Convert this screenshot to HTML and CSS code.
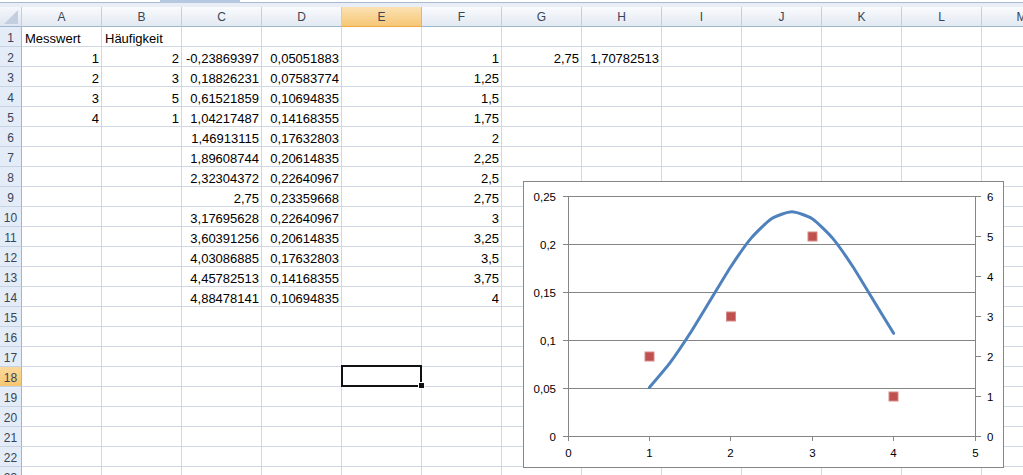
FILE: index.html
```html
<!DOCTYPE html>
<html lang="de">
<head>
<meta charset="utf-8">
<title>Tabelle</title>
<link rel="stylesheet" href="styles.css">
</head>
<body>
<div class="topbar"><div class="tab"></div></div>
<div class="sheet">
  <div class="row head">
    <div class="corner"></div>
    <div class="ch">A</div><div class="ch">B</div><div class="ch">C</div><div class="ch">D</div><div class="ch on">E</div><div class="ch">F</div><div class="ch">G</div><div class="ch">H</div><div class="ch">I</div><div class="ch">J</div><div class="ch">K</div><div class="ch">L</div><div class="ch">M</div>
  </div>
  <div class="row"><div class="rh">1</div><div class="c">Messwert</div><div class="c">Häufigkeit</div><div class="c"></div><div class="c"></div><div class="c"></div><div class="c"></div><div class="c"></div><div class="c"></div><div class="c"></div><div class="c"></div><div class="c"></div><div class="c"></div><div class="c"></div></div>
  <div class="row"><div class="rh">2</div><div class="c n">1</div><div class="c n">2</div><div class="c n">-0,23869397</div><div class="c n">0,05051883</div><div class="c"></div><div class="c n">1</div><div class="c n">2,75</div><div class="c n">1,70782513</div><div class="c"></div><div class="c"></div><div class="c"></div><div class="c"></div><div class="c"></div></div>
  <div class="row"><div class="rh">3</div><div class="c n">2</div><div class="c n">3</div><div class="c n">0,18826231</div><div class="c n">0,07583774</div><div class="c"></div><div class="c n">1,25</div><div class="c"></div><div class="c"></div><div class="c"></div><div class="c"></div><div class="c"></div><div class="c"></div><div class="c"></div></div>
  <div class="row"><div class="rh">4</div><div class="c n">3</div><div class="c n">5</div><div class="c n">0,61521859</div><div class="c n">0,10694835</div><div class="c"></div><div class="c n">1,5</div><div class="c"></div><div class="c"></div><div class="c"></div><div class="c"></div><div class="c"></div><div class="c"></div><div class="c"></div></div>
  <div class="row"><div class="rh">5</div><div class="c n">4</div><div class="c n">1</div><div class="c n">1,04217487</div><div class="c n">0,14168355</div><div class="c"></div><div class="c n">1,75</div><div class="c"></div><div class="c"></div><div class="c"></div><div class="c"></div><div class="c"></div><div class="c"></div><div class="c"></div></div>
  <div class="row"><div class="rh">6</div><div class="c"></div><div class="c"></div><div class="c n">1,46913115</div><div class="c n">0,17632803</div><div class="c"></div><div class="c n">2</div><div class="c"></div><div class="c"></div><div class="c"></div><div class="c"></div><div class="c"></div><div class="c"></div><div class="c"></div></div>
  <div class="row"><div class="rh">7</div><div class="c"></div><div class="c"></div><div class="c n">1,89608744</div><div class="c n">0,20614835</div><div class="c"></div><div class="c n">2,25</div><div class="c"></div><div class="c"></div><div class="c"></div><div class="c"></div><div class="c"></div><div class="c"></div><div class="c"></div></div>
  <div class="row"><div class="rh">8</div><div class="c"></div><div class="c"></div><div class="c n">2,32304372</div><div class="c n">0,22640967</div><div class="c"></div><div class="c n">2,5</div><div class="c"></div><div class="c"></div><div class="c"></div><div class="c"></div><div class="c"></div><div class="c"></div><div class="c"></div></div>
  <div class="row"><div class="rh">9</div><div class="c"></div><div class="c"></div><div class="c n">2,75</div><div class="c n">0,23359668</div><div class="c"></div><div class="c n">2,75</div><div class="c"></div><div class="c"></div><div class="c"></div><div class="c"></div><div class="c"></div><div class="c"></div><div class="c"></div></div>
  <div class="row"><div class="rh">10</div><div class="c"></div><div class="c"></div><div class="c n">3,17695628</div><div class="c n">0,22640967</div><div class="c"></div><div class="c n">3</div><div class="c"></div><div class="c"></div><div class="c"></div><div class="c"></div><div class="c"></div><div class="c"></div><div class="c"></div></div>
  <div class="row"><div class="rh">11</div><div class="c"></div><div class="c"></div><div class="c n">3,60391256</div><div class="c n">0,20614835</div><div class="c"></div><div class="c n">3,25</div><div class="c"></div><div class="c"></div><div class="c"></div><div class="c"></div><div class="c"></div><div class="c"></div><div class="c"></div></div>
  <div class="row"><div class="rh">12</div><div class="c"></div><div class="c"></div><div class="c n">4,03086885</div><div class="c n">0,17632803</div><div class="c"></div><div class="c n">3,5</div><div class="c"></div><div class="c"></div><div class="c"></div><div class="c"></div><div class="c"></div><div class="c"></div><div class="c"></div></div>
  <div class="row"><div class="rh">13</div><div class="c"></div><div class="c"></div><div class="c n">4,45782513</div><div class="c n">0,14168355</div><div class="c"></div><div class="c n">3,75</div><div class="c"></div><div class="c"></div><div class="c"></div><div class="c"></div><div class="c"></div><div class="c"></div><div class="c"></div></div>
  <div class="row"><div class="rh">14</div><div class="c"></div><div class="c"></div><div class="c n">4,88478141</div><div class="c n">0,10694835</div><div class="c"></div><div class="c n">4</div><div class="c"></div><div class="c"></div><div class="c"></div><div class="c"></div><div class="c"></div><div class="c"></div><div class="c"></div></div>
  <div class="row"><div class="rh">15</div><div class="c"></div><div class="c"></div><div class="c"></div><div class="c"></div><div class="c"></div><div class="c"></div><div class="c"></div><div class="c"></div><div class="c"></div><div class="c"></div><div class="c"></div><div class="c"></div><div class="c"></div></div>
  <div class="row"><div class="rh">16</div><div class="c"></div><div class="c"></div><div class="c"></div><div class="c"></div><div class="c"></div><div class="c"></div><div class="c"></div><div class="c"></div><div class="c"></div><div class="c"></div><div class="c"></div><div class="c"></div><div class="c"></div></div>
  <div class="row"><div class="rh">17</div><div class="c"></div><div class="c"></div><div class="c"></div><div class="c"></div><div class="c"></div><div class="c"></div><div class="c"></div><div class="c"></div><div class="c"></div><div class="c"></div><div class="c"></div><div class="c"></div><div class="c"></div></div>
  <div class="row"><div class="rh on">18</div><div class="c"></div><div class="c"></div><div class="c"></div><div class="c"></div><div class="c sel"></div><div class="c"></div><div class="c"></div><div class="c"></div><div class="c"></div><div class="c"></div><div class="c"></div><div class="c"></div><div class="c"></div></div>
  <div class="row"><div class="rh">19</div><div class="c"></div><div class="c"></div><div class="c"></div><div class="c"></div><div class="c"></div><div class="c"></div><div class="c"></div><div class="c"></div><div class="c"></div><div class="c"></div><div class="c"></div><div class="c"></div><div class="c"></div></div>
  <div class="row"><div class="rh">20</div><div class="c"></div><div class="c"></div><div class="c"></div><div class="c"></div><div class="c"></div><div class="c"></div><div class="c"></div><div class="c"></div><div class="c"></div><div class="c"></div><div class="c"></div><div class="c"></div><div class="c"></div></div>
  <div class="row"><div class="rh">21</div><div class="c"></div><div class="c"></div><div class="c"></div><div class="c"></div><div class="c"></div><div class="c"></div><div class="c"></div><div class="c"></div><div class="c"></div><div class="c"></div><div class="c"></div><div class="c"></div><div class="c"></div></div>
  <div class="row"><div class="rh">22</div><div class="c"></div><div class="c"></div><div class="c"></div><div class="c"></div><div class="c"></div><div class="c"></div><div class="c"></div><div class="c"></div><div class="c"></div><div class="c"></div><div class="c"></div><div class="c"></div><div class="c"></div></div>
  <div class="row"><div class="rh">23</div><div class="c"></div><div class="c"></div><div class="c"></div><div class="c"></div><div class="c"></div><div class="c"></div><div class="c"></div><div class="c"></div><div class="c"></div><div class="c"></div><div class="c"></div><div class="c"></div><div class="c"></div></div>
</div>

<svg class="chart" width="481" height="287" viewBox="0 0 481 287" xmlns="http://www.w3.org/2000/svg">
  <rect x="0.5" y="0.5" width="480" height="286" fill="#fff" stroke="#868686"/>
  <g stroke="#868686" stroke-width="1" fill="none">
    <path d="M45 15.5H452.5M45 63.5H452.5M45 111.5H452.5M45 159.5H452.5M45 207.5H452.5"/>
    <path d="M45.5 15V256M452.5 15V256M45 255.5H453"/>
    <path d="M40 15.5H45M40 63.5H45M40 111.5H45M40 159.5H45M40 207.5H45M40 255.5H45"/>
    <path d="M453 15.5H458M453 55.5H458M453 95.5H458M453 135.5H458M453 175.5H458M453 215.5H458M453 255.5H458"/>
    <path d="M45.5 256V260M126.5 256V260M207.5 256V260M289.5 256V260M370.5 256V260M452.5 256V260"/>
  </g>
  <g class="lbl" text-anchor="end">
    <text x="33" y="19.5">0,25</text>
    <text x="33" y="67.5">0,2</text>
    <text x="33" y="115.5">0,15</text>
    <text x="33" y="163.5">0,1</text>
    <text x="33" y="211.5">0,05</text>
    <text x="33" y="259.5">0</text>
  </g>
  <g class="lbl" text-anchor="start">
    <text x="464" y="19.5">6</text>
    <text x="464" y="59.5">5</text>
    <text x="464" y="99.5">4</text>
    <text x="464" y="139.5">3</text>
    <text x="464" y="179.5">2</text>
    <text x="464" y="219.5">1</text>
    <text x="464" y="259.5">0</text>
  </g>
  <g class="lbl" text-anchor="middle">
    <text x="45.5" y="276">0</text>
    <text x="126.5" y="276">1</text>
    <text x="207.5" y="276">2</text>
    <text x="289.5" y="276">3</text>
    <text x="370.5" y="276">4</text>
    <text x="452.5" y="276">5</text>
  </g>
  <path fill="none" stroke="#4f81bd" stroke-width="3" stroke-linecap="round" stroke-linejoin="round"
    d="M126.4 206.5C128.44 204.07 142.68 187.62 146.75 182.2C150.82 176.78 163.03 158.62 167.1 152.3C171.17 145.98 183.38 125.66 187.45 119C191.52 112.34 203.73 91.89 207.8 85.7C211.87 79.51 224.08 61.91 228.15 57.1C232.22 52.29 244.43 40.29 248.5 37.65C252.57 35.01 264.78 30.75 268.85 30.75C272.92 30.75 285.13 35.01 289.2 37.65C293.27 40.29 305.48 52.29 309.55 57.1C313.62 61.91 325.83 79.51 329.9 85.7C333.97 91.89 346.18 112.34 350.25 119C354.32 125.66 368.57 148.97 370.6 152.3"/>
  <g fill="#c0504d" stroke="#d58a88" stroke-width="1">
    <rect x="122" y="171" width="9" height="9"/>
    <rect x="203.5" y="131" width="9" height="9"/>
    <rect x="285" y="51" width="9" height="9"/>
    <rect x="366" y="211" width="9" height="9"/>
  </g>
</svg>
</body>
</html>
```

FILE: styles.css
```css
html, body {
  margin: 0;
  padding: 0;
}
body {
  width: 1023px;
  height: 475px;
  overflow: hidden;
  position: relative;
  background: #fff;
  font-family: "Liberation Sans", Arial, sans-serif;
  font-size: 13px;
  color: #000;
}
.topbar {
  height: 7px;
  background: linear-gradient(#ffffff 0 2px, #a9bad0 2px 3px, #e9eef6 3px 7px);
  position: relative;
}
.tab {
  position: absolute;
  left: 160px;
  top: 0;
  width: 80px;
  height: 3px;
  background: #b6c8e0;
  border-radius: 0 0 2px 2px;
}
.sheet {
  width: 1062px;
}
.row {
  display: grid;
  grid-template-columns: 22px repeat(13, 80px);
  height: 20px;
}
.head .ch, .corner {
  box-sizing: border-box;
  height: 20px;
  background: linear-gradient(#f9fbfd, #e3e9f2);
  border-right: 1px solid #c5cfdc;
  border-bottom: 1px solid #9eb6ce;
  font-size: 12px;
  color: #384558;
  text-align: center;
  line-height: 19px;
  padding-top: 1px;
}
.head .ch.on {
  background: linear-gradient(#fbe2b4, #f6c676);
  border-right-color: #e9b462;
  border-bottom-color: #f0a940;
}
.corner {
  position: relative;
  background: linear-gradient(#f4f7fb, #dfe6f0);
}
.corner::after {
  content: "";
  position: absolute;
  left: 4px;
  top: 3px;
  width: 14px;
  height: 14px;
  background: #c3cfdf;
  clip-path: polygon(100% 0, 100% 100%, 0 100%);
}
.rh {
  box-sizing: border-box;
  height: 20px;
  background: #e4ecf7;
  border-right: 1px solid #9eb6ce;
  border-bottom: 1px solid #c6d3e4;
  font-size: 12px;
  color: #384558;
  text-align: center;
  line-height: 19px;
  padding-top: 2px;
}
.rh.on {
  background: linear-gradient(#fbd99b, #f8c670);
  border-right-color: #e9a94a;
}
.c {
  box-sizing: border-box;
  height: 20px;
  border-right: 1px solid #d0d7e5;
  border-bottom: 1px solid #d0d7e5;
  white-space: nowrap;
  line-height: 19px;
  padding: 2px 2px 0 3px;
  position: relative;
}
.c.n {
  text-align: right;
}
.c.sel::after {
  content: "";
  position: absolute;
  left: -1px;
  top: -2px;
  right: -1px;
  bottom: -1px;
  border: 2px solid #111;
}
.c.sel::before {
  content: "";
  position: absolute;
  right: -3px;
  bottom: -2px;
  width: 5px;
  height: 5px;
  background: #111;
  outline: 1px solid #fff;
  z-index: 1;
}
.chart {
  position: absolute;
  left: 523px;
  top: 181px;
  display: block;
}
.lbl text {
  font-family: "Liberation Sans", Arial, sans-serif;
  font-size: 11.5px;
  fill: #000;
}
```
